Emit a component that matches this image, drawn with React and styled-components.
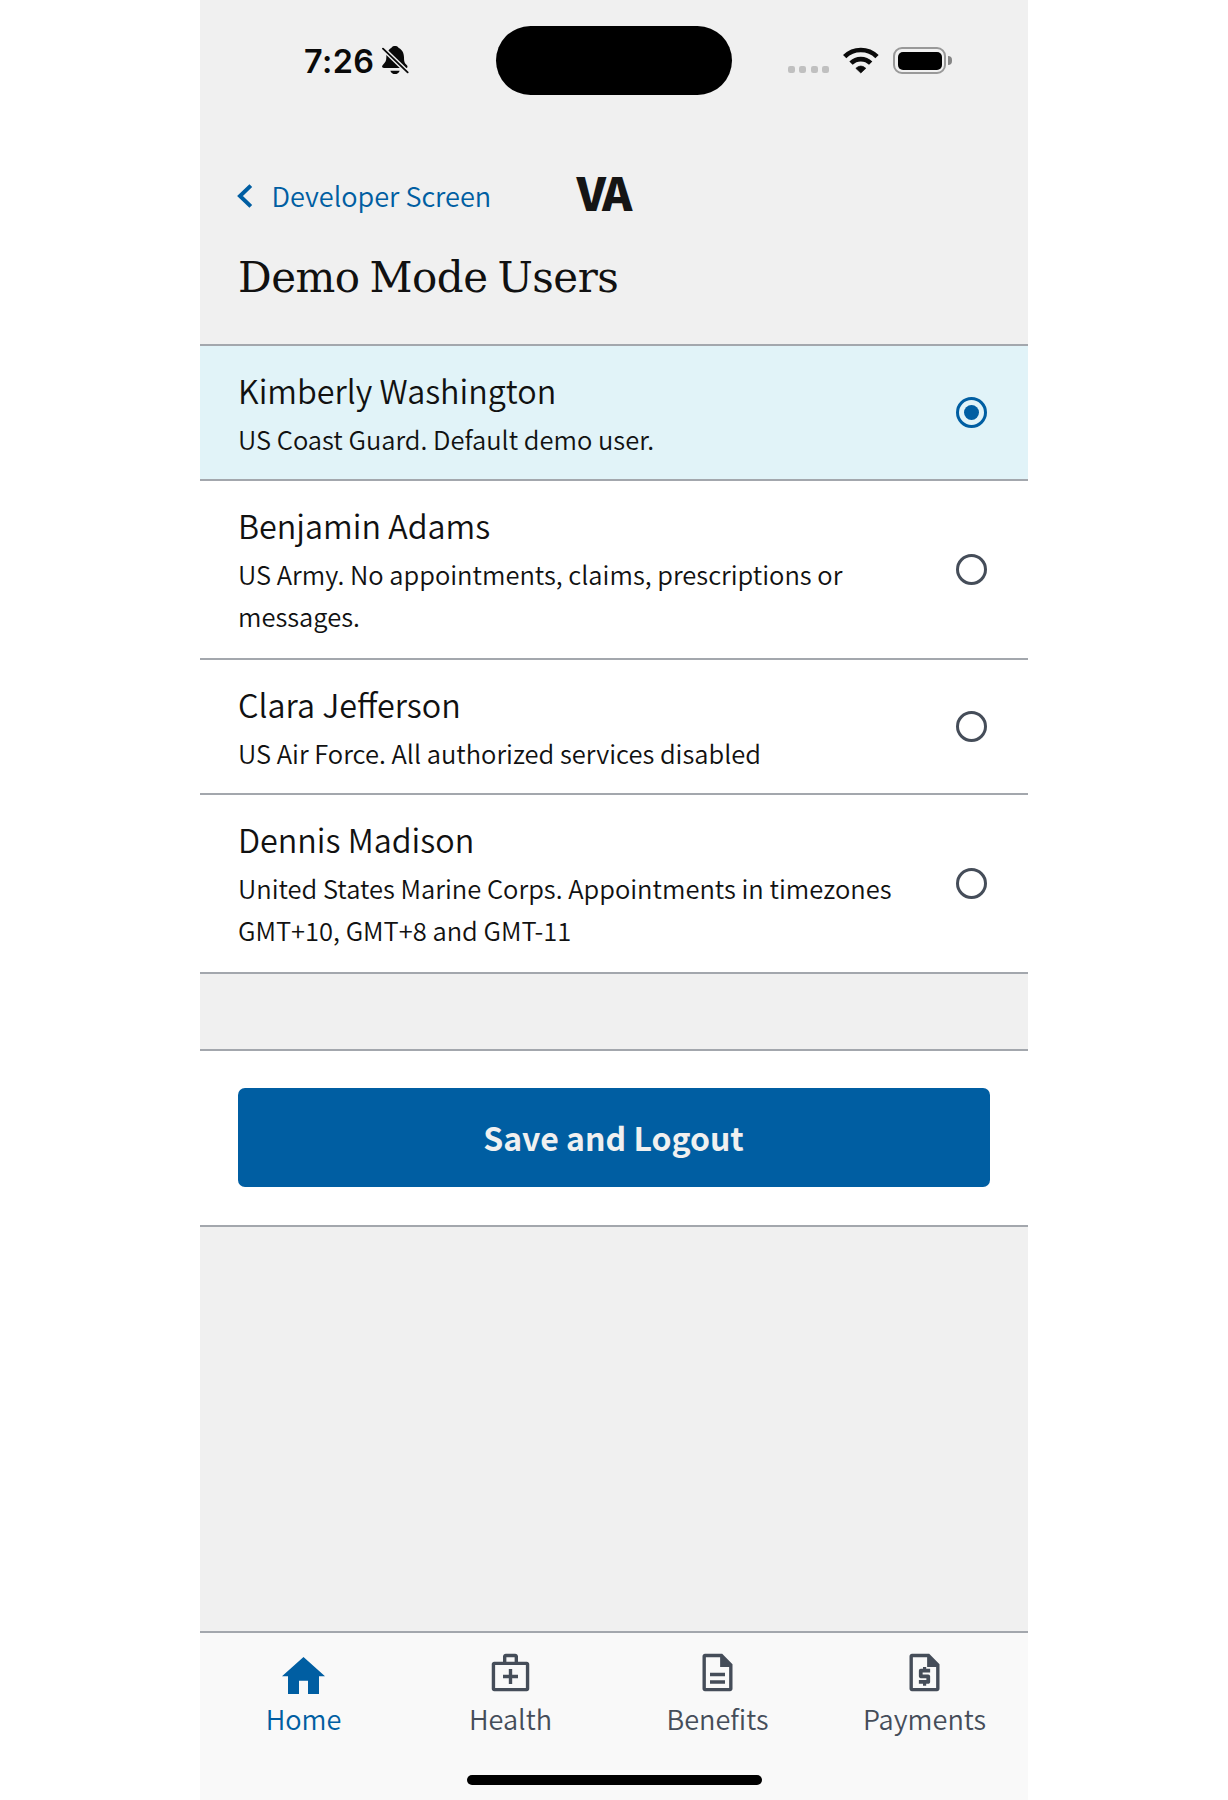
import React, { useState } from "react";
import styled, { createGlobalStyle } from "styled-components";

const color = {
  canvas: "#f0f0f0",
  surface: "#ffffff",
  selected: "#e1f3f8",
  line: "#a3a7ad",
  text: "#111111",
  link: "#005ea2",
  muted: "#454d59",
  tabBar: "#f9f9f9",
};

const sans = `"Noto Sans CJK SC", "Noto Sans", sans-serif`;

const GlobalStyle = createGlobalStyle`
  *, *::before, *::after { box-sizing: border-box; }
  body { margin: 0; background: #fff; }
`;

const Page = styled.div`
  display: flex;
  justify-content: center;
  min-height: 1800px;
  background: #fff;
`;

const Phone = styled.main`
  display: flex;
  flex-direction: column;
  width: 828px;
  height: 1800px;
  background: ${color.canvas};
  color: ${color.text};
  font-family: ${sans};
  font-weight: 350;
`;

const StatusBar = styled.div`
  display: flex;
  align-items: center;
  height: 121px;
  padding-left: 104px;
`;

const StatusLeft = styled.div`
  display: flex;
  align-items: center;
  gap: 9px;
  width: 192px;
`;

const Clock = styled.span`
  width: 69px;
  padding-top: 2px;
  white-space: nowrap;
  font: 600 32.4px/40px Inter, sans-serif;
  letter-spacing: 0.4px;
  color: #0a0a0a;
`;

const Island = styled.div`
  width: 236px;
  height: 69px;
  border-radius: 35px;
  background: #000;
`;

const StatusRight = styled.div`
  display: flex;
  align-items: center;
  margin-left: 56px;
`;

const Dots = styled.div`
  display: flex;
  gap: 4.3px;
  margin: 18px 14.5px 0 0;
`;

const Dot = styled.span`
  width: 7px;
  height: 7px;
  border-radius: 2.2px;
  background: #c0c0c0;
`;

const Battery = styled.div`
  display: flex;
  align-items: center;
  gap: 2px;
  margin-left: 14px;
`;

const BatteryShell = styled.div`
  width: 53px;
  height: 27px;
  padding: 2.5px;
  border: 2px solid #999;
  border-radius: 9px;
`;

const BatteryFill = styled.div`
  height: 100%;
  border-radius: 5px;
  background: #000;
`;

const BatteryNub = styled.div`
  width: 3.5px;
  height: 9px;
  border-radius: 0 4px 4px 0;
  background: #858585;
`;

const Nav = styled.nav`
  display: grid;
  grid-template-columns: 1fr auto 1fr;
  align-items: center;
  height: 110px;
  padding: 40px 59px 0 37px;
`;

const BackLink = styled.button`
  display: flex;
  align-items: center;
  gap: 18.5px;
  padding: 0;
  border: 0;
  background: none;
  color: ${color.link};
  font: 350 27.1px/40px ${sans};
  white-space: nowrap;
`;

const Brand = styled.span`
  margin-top: -10px;
  font: 900 46px/60px ${sans};
  letter-spacing: -3px;
  color: #151515;
`;

const Title = styled.h1`
  margin: 0;
  height: 113px;
  padding: 17px 38px 0;
  font: 400 42px/60px "DejaVu Serif", serif;
  letter-spacing: -0.5px;
  word-spacing: -3px;
  white-space: nowrap;
`;

const UserList = styled.div`
  display: flex;
  flex-direction: column;
  border-bottom: 2px solid ${color.line};
`;

const UserRow = styled.div`
  display: flex;
  align-items: center;
  justify-content: space-between;
  height: ${(p) => (p.$tall ? 179 : 135)}px;
  padding: 0 41px 0 38px;
  border-top: 2px solid ${color.line};
  background: ${(p) => (p.$selected ? color.selected : color.surface)};
`;

const UserText = styled.div`
  display: flex;
  flex-direction: column;
  align-self: flex-start;
  gap: 4.5px;
  width: 680px;
  padding-top: 22px;
`;

const UserName = styled.div`
  font-size: 32.3px;
  line-height: 45px;
`;

const UserNote = styled.div`
  font-size: 25.5px;
  line-height: 42.7px;
`;

const Radio = styled.span`
  display: grid;
  place-items: center;
  width: 31px;
  height: 31px;
  border: 3px solid ${(p) => (p.$selected ? color.link : color.muted)};
  border-radius: 50%;

  &::after {
    content: "";
    width: 15px;
    height: 15px;
    border-radius: 50%;
    background: ${(p) => (p.$selected ? color.link : "transparent")};
  }
`;

const ActionPanel = styled.section`
  height: 178px;
  margin-top: 75px;
  padding: 37px 38px 0;
  border-top: 2px solid ${color.line};
  border-bottom: 2px solid ${color.line};
  background: ${color.surface};
`;

const SaveButton = styled.button`
  display: block;
  width: 100%;
  height: 99px;
  padding: 0 1px 1px 0;
  border: 0;
  border-radius: 7px;
  background: ${color.link};
  color: #f0f0f0;
  font: 700 32px/48px ${sans};
`;

const TabBar = styled.footer`
  display: flex;
  flex-direction: column;
  align-items: center;
  justify-content: space-between;
  height: 169px;
  margin-top: auto;
  padding: 16.5px 0 15px;
  border-top: 2px solid ${color.line};
  background: ${color.tabBar};
`;

const Tabs = styled.div`
  display: grid;
  grid-template-columns: repeat(4, 1fr);
  width: 100%;
`;

const Tab = styled.button`
  display: flex;
  flex-direction: column;
  align-items: center;
  gap: 6.5px;
  padding: 0;
  border: 0;
  background: none;
  color: ${(p) => (p.$active ? color.link : color.muted)};
  font: 350 27.1px/36px ${sans};
`;

const HomeIndicator = styled.div`
  width: 295px;
  height: 10px;
  border-radius: 5px;
  background: #000;
`;

const BellOff = () => (
  <svg width="27" height="29" viewBox="0 0 81 87">
    <path
      fill="#0a0a0a"
      d="M39 0c5 0 9 2 11 6 10 4 16 15 16 28 0 14 2 18 8 23 4 4 3 9-2 9H6c-6 0-8-5-3-10 7-6 10-11 10-22 0-13 6-24 15-28 2-4 6-6 11-6zM25 74h28c-2 7-8 10-14 10s-12-3-14-10z"
    />
    <path d="M-6 -1L86 88" stroke={color.canvas} strokeWidth="14" />
    <path d="M3 8L77 79" stroke="#0a0a0a" strokeWidth="5.500" strokeLinecap="round" />
  </svg>
);

const Wifi = () => (
  <svg width="36" height="27" viewBox="0 0 108 81" fill="none">
    <path d="M5 29A69 69 0 0 1 102 29" stroke="#0a0a0a" strokeWidth="14" />
    <path d="M24 48.500A42 42 0 0 1 83 48.500" stroke="#0a0a0a" strokeWidth="14" />
    <path d="M53.500 78L38.500 64Q53.500 50 68.500 64Z" fill="#0a0a0a" stroke="#0a0a0a" strokeWidth="2" strokeLinejoin="round" />
  </svg>
);

const ChevronLeft = () => (
  <svg width="16" height="24" viewBox="0 0 16 24" fill="none">
    <path d="M13.800 1.600L3 12L13.800 22.400" stroke={color.link} strokeWidth="4" />
  </svg>
);

const HomeIcon = () => (
  <svg width="45" height="45" viewBox="0 0 45 45" fill="currentColor">
    <path d="M22.500 7L44 26.300H38V44H27V30.800H18V44H7V26.300H1Z" />
  </svg>
);

const HealthIcon = () => (
  <svg width="45" height="45" viewBox="0 0 24 24" fill="currentColor">
    <path d="M20.700 6.200H16V3.500C16 2.700 15.300 2 14.500 2h-5C8.700 2 8 2.700 8 3.500v2.700H3.300C2.600 6.200 2 6.800 2 7.500v13.200c0 .7.600 1.300 1.300 1.300h17.400c.7 0 1.300-.6 1.300-1.300V7.500c0-.7-.6-1.300-1.300-1.300zM9.800 3.800h4.400v2.400H9.800zM20.200 20.200H3.800V8h16.400z" />
    <path d="M12.900 10.100h-1.800v3.100H8V15h3.100v3.100h1.800V15H16v-1.800h-3.100z" />
  </svg>
);

const sheet =
  "M14.500 2H5.300C4.600 2 4 2.600 4 3.300v17.400c0 .7.600 1.300 1.300 1.300h13.400c.7 0 1.300-.6 1.300-1.300V7.600zM18.200 20.200H5.800V3.800h7.600V9h4.800z";

const BenefitsIcon = () => (
  <svg width="45" height="45" viewBox="0 0 24 24" fill="currentColor">
    <path d={sheet} />
    <path d="M8 12.100h8v1.900H8zM8 16.100h8V18H8z" />
  </svg>
);

const PaymentsIcon = () => (
  <svg width="45" height="45" viewBox="0 0 24 24" fill="currentColor">
    <path d={sheet} />
    <path d="M11.200 19h1.700v-1H14c.55 0 1-.45 1-1v-3c0-.55-.45-1-1-1h-3v-1h4v-2h-2.100V9h-1.700v1H10c-.55 0-1 .45-1 1v3c0 .55.450 1 1 1h3v1H9v2h2.200z" />
  </svg>
);

const users = [
  { name: "Kimberly Washington", lines: ["US Coast Guard. Default demo user."] },
  {
    name: "Benjamin Adams",
    lines: ["US Army. No appointments, claims, prescriptions or", "messages."],
  },
  { name: "Clara Jefferson", lines: ["US Air Force. All authorized services disabled"] },
  {
    name: "Dennis Madison",
    lines: ["United States Marine Corps. Appointments in timezones", "GMT+10, GMT+8 and GMT-11"],
  },
];

const tabs = [
  { label: "Home", Icon: HomeIcon },
  { label: "Health", Icon: HealthIcon },
  { label: "Benefits", Icon: BenefitsIcon },
  { label: "Payments", Icon: PaymentsIcon },
];

export default function App() {
  const [selected, setSelected] = useState(0);
  return (
    <Page>
      <GlobalStyle />
      <Phone>
        <StatusBar>
          <StatusLeft>
            <Clock>7:26</Clock>
            <BellOff />
          </StatusLeft>
          <Island />
          <StatusRight>
            <Dots>
              <Dot />
              <Dot />
              <Dot />
              <Dot />
            </Dots>
            <Wifi />
            <Battery>
              <BatteryShell>
                <BatteryFill />
              </BatteryShell>
              <BatteryNub />
            </Battery>
          </StatusRight>
        </StatusBar>
        <Nav>
          <BackLink>
            <ChevronLeft />
            Developer Screen
          </BackLink>
          <Brand>VA</Brand>
        </Nav>
        <Title>Demo Mode Users</Title>
        <UserList role="radiogroup">
          {users.map((u, i) => (
            <UserRow
              key={u.name}
              role="radio"
              aria-checked={i === selected}
              $selected={i === selected}
              $tall={u.lines.length > 1}
              onClick={() => setSelected(i)}
            >
              <UserText>
                <UserName>{u.name}</UserName>
                <UserNote>
                  {u.lines.map((line) => (
                    <div key={line}>{line}</div>
                  ))}
                </UserNote>
              </UserText>
              <Radio $selected={i === selected} />
            </UserRow>
          ))}
        </UserList>
        <ActionPanel>
          <SaveButton>Save and Logout</SaveButton>
        </ActionPanel>
        <TabBar>
          <Tabs>
            {tabs.map(({ label, Icon }, i) => (
              <Tab key={label} $active={i === 0}>
                <Icon />
                {label}
              </Tab>
            ))}
          </Tabs>
          <HomeIndicator />
        </TabBar>
      </Phone>
    </Page>
  );
}
